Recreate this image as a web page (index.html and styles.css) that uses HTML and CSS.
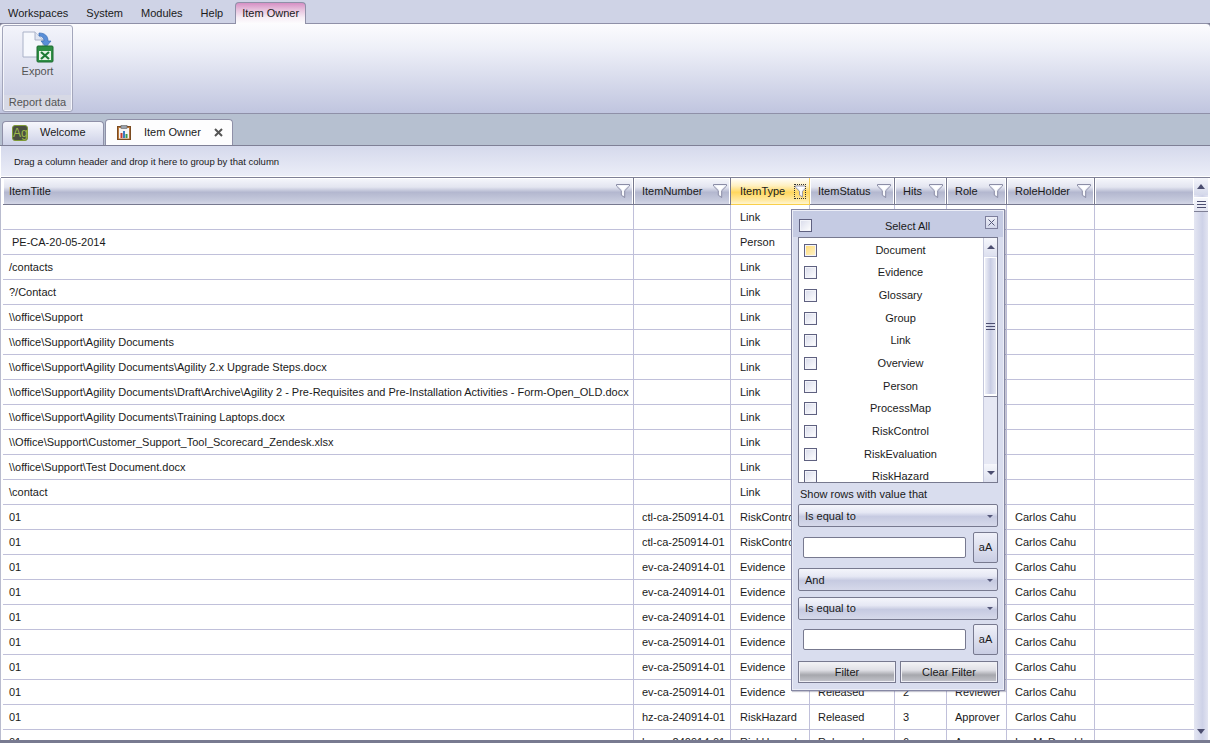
FILE: index.html
```html
<!DOCTYPE html>
<html lang="en">
<head>
<meta charset="utf-8">
<title>Item Owner</title>
<link rel="stylesheet" href="styles.css">
</head>
<body>
<svg class="defs" width="0" height="0" aria-hidden="true">
  <symbol id="funnel" viewBox="0 0 14 14">
    <path d="M0.5 0.5H13.5V2L8.7 6.7V13.5L5.3 11.2V6.7L0.5 2Z" fill="#eef0f8" stroke="#8b8da6" stroke-width="1"/>
    <path d="M2.5 1.8H11.5L7.6 5.8V11.3L6.4 10.5V5.8Z" fill="#fff"/>
  </symbol>
</svg>
<div class="app">
  <nav class="menu">
    <span class="menu-item">Workspaces</span>
    <span class="menu-item">System</span>
    <span class="menu-item">Modules</span>
    <span class="menu-item">Help</span>
    <span class="menu-item menu-active">Item Owner</span>
  </nav>
  <section class="ribbon">
    <div class="ribbon-group">
      <div class="ribbon-body">
        <svg class="export-icon" width="32" height="32" viewBox="0 0 32 32">
          <path d="M1 1H13L21 9V26H1Z" fill="#f6f8fd" stroke="#aab2c8"/>
          <path d="M13 1V9H21" fill="#dfe5f2" stroke="#aab2c8"/>
          <path d="M17 2C23 2 26 5 26 10H29L24 16L19 10H22C22 7 20 5 17 5Z" fill="#5a8fd8" stroke="#3a6db5" stroke-width=".7"/>
          <rect x="15" y="15" width="16" height="16" rx="1" fill="#2f8f45" stroke="#1d6b30"/>
          <rect x="17" y="20" width="12" height="9" fill="#e9f5e9"/>
          <path d="M19 21L27 28M27 21L19 28" stroke="#1d7a35" stroke-width="2.2"/>
        </svg>
        <span class="export-label">Export</span>
      </div>
      <div class="ribbon-title">Report data</div>
    </div>
  </section>
  <div class="tabs">
    <div class="tab tab-plain">
      <span class="ag-icon">Ag</span>
      <span>Welcome</span>
    </div>
    <div class="tab tab-current">
      <svg class="clip-icon" width="14" height="15" viewBox="0 0 14 15">
        <rect x="0.5" y="1.5" width="13" height="13" fill="#b8763a" stroke="#7a4a20"/>
        <rect x="2" y="3" width="10" height="10.5" fill="#f4f4f4"/>
        <rect x="4" y="0.5" width="6" height="3" fill="#9aa2ad" stroke="#666"  stroke-width=".6"/>
        <rect x="3.5" y="8" width="2" height="5" fill="#c23b32"/>
        <rect x="6" y="6" width="2" height="7" fill="#3b7ac2"/>
        <rect x="8.5" y="9" width="2" height="4" fill="#3d9a4a"/>
      </svg>
      <span class="tab-name">Item Owner</span>
      <svg class="tab-close" width="9" height="9" viewBox="0 0 9 9"><path d="M1 1L8 8M8 1L1 8" stroke="#555" stroke-width="2"/></svg>
    </div>
  </div>
  <main class="content">
    <div class="group-panel"><span>Drag a column header and drop it here to group by that column</span></div>
    <div class="grid-wrap">
      <div class="grid">
        <div class="row head">
          <div class="cell c1"><span>ItemTitle</span><svg class="funnel"><use href="#funnel"/></svg></div>
          <div class="cell c2"><span>ItemNumber</span><svg class="funnel"><use href="#funnel"/></svg></div>
          <div class="cell c3 hot"><span>ItemType</span><span class="focus"><svg class="funnel"><use href="#funnel"/></svg></span></div>
          <div class="cell c4"><span>ItemStatus</span><svg class="funnel"><use href="#funnel"/></svg></div>
          <div class="cell c5"><span>Hits</span><svg class="funnel"><use href="#funnel"/></svg></div>
          <div class="cell c6"><span>Role</span><svg class="funnel"><use href="#funnel"/></svg></div>
          <div class="cell c7"><span>RoleHolder</span><svg class="funnel"><use href="#funnel"/></svg></div>
          <div class="cell c8"></div>
        </div>
        <div class="row"><div class="cell c1"></div><div class="cell c2"></div><div class="cell c3">Link</div><div class="cell c4"></div><div class="cell c5"></div><div class="cell c6"></div><div class="cell c7"></div><div class="cell c8"></div></div>
        <div class="row"><div class="cell c1 indent">PE-CA-20-05-2014</div><div class="cell c2"></div><div class="cell c3">Person</div><div class="cell c4"></div><div class="cell c5"></div><div class="cell c6"></div><div class="cell c7"></div><div class="cell c8"></div></div>
        <div class="row"><div class="cell c1">/contacts</div><div class="cell c2"></div><div class="cell c3">Link</div><div class="cell c4"></div><div class="cell c5"></div><div class="cell c6"></div><div class="cell c7"></div><div class="cell c8"></div></div>
        <div class="row"><div class="cell c1">?/Contact</div><div class="cell c2"></div><div class="cell c3">Link</div><div class="cell c4"></div><div class="cell c5"></div><div class="cell c6"></div><div class="cell c7"></div><div class="cell c8"></div></div>
        <div class="row"><div class="cell c1">\\office\Support</div><div class="cell c2"></div><div class="cell c3">Link</div><div class="cell c4"></div><div class="cell c5"></div><div class="cell c6"></div><div class="cell c7"></div><div class="cell c8"></div></div>
        <div class="row"><div class="cell c1">\\office\Support\Agility Documents</div><div class="cell c2"></div><div class="cell c3">Link</div><div class="cell c4"></div><div class="cell c5"></div><div class="cell c6"></div><div class="cell c7"></div><div class="cell c8"></div></div>
        <div class="row"><div class="cell c1">\\office\Support\Agility Documents\Agility 2.x Upgrade Steps.docx</div><div class="cell c2"></div><div class="cell c3">Link</div><div class="cell c4"></div><div class="cell c5"></div><div class="cell c6"></div><div class="cell c7"></div><div class="cell c8"></div></div>
        <div class="row"><div class="cell c1">\\office\Support\Agility Documents\Draft\Archive\Agility 2 - Pre-Requisites and Pre-Installation Activities - Form-Open_OLD.docx</div><div class="cell c2"></div><div class="cell c3">Link</div><div class="cell c4"></div><div class="cell c5"></div><div class="cell c6"></div><div class="cell c7"></div><div class="cell c8"></div></div>
        <div class="row"><div class="cell c1">\\office\Support\Agility Documents\Training Laptops.docx</div><div class="cell c2"></div><div class="cell c3">Link</div><div class="cell c4"></div><div class="cell c5"></div><div class="cell c6"></div><div class="cell c7"></div><div class="cell c8"></div></div>
        <div class="row"><div class="cell c1">\\Office\Support\Customer_Support_Tool_Scorecard_Zendesk.xlsx</div><div class="cell c2"></div><div class="cell c3">Link</div><div class="cell c4"></div><div class="cell c5"></div><div class="cell c6"></div><div class="cell c7"></div><div class="cell c8"></div></div>
        <div class="row"><div class="cell c1">\\office\Support\Test Document.docx</div><div class="cell c2"></div><div class="cell c3">Link</div><div class="cell c4"></div><div class="cell c5"></div><div class="cell c6"></div><div class="cell c7"></div><div class="cell c8"></div></div>
        <div class="row"><div class="cell c1">\contact</div><div class="cell c2"></div><div class="cell c3">Link</div><div class="cell c4"></div><div class="cell c5"></div><div class="cell c6"></div><div class="cell c7"></div><div class="cell c8"></div></div>
        <div class="row"><div class="cell c1">01</div><div class="cell c2">ctl-ca-250914-01</div><div class="cell c3">RiskControl</div><div class="cell c4">Released</div><div class="cell c5">2</div><div class="cell c6">Reviewer</div><div class="cell c7">Carlos Cahu</div><div class="cell c8"></div></div>
        <div class="row"><div class="cell c1">01</div><div class="cell c2">ctl-ca-250914-01</div><div class="cell c3">RiskControl</div><div class="cell c4">Released</div><div class="cell c5">2</div><div class="cell c6">Reviewer</div><div class="cell c7">Carlos Cahu</div><div class="cell c8"></div></div>
        <div class="row"><div class="cell c1">01</div><div class="cell c2">ev-ca-240914-01</div><div class="cell c3">Evidence</div><div class="cell c4">Released</div><div class="cell c5">2</div><div class="cell c6">Reviewer</div><div class="cell c7">Carlos Cahu</div><div class="cell c8"></div></div>
        <div class="row"><div class="cell c1">01</div><div class="cell c2">ev-ca-240914-01</div><div class="cell c3">Evidence</div><div class="cell c4">Released</div><div class="cell c5">2</div><div class="cell c6">Reviewer</div><div class="cell c7">Carlos Cahu</div><div class="cell c8"></div></div>
        <div class="row"><div class="cell c1">01</div><div class="cell c2">ev-ca-240914-01</div><div class="cell c3">Evidence</div><div class="cell c4">Released</div><div class="cell c5">2</div><div class="cell c6">Reviewer</div><div class="cell c7">Carlos Cahu</div><div class="cell c8"></div></div>
        <div class="row"><div class="cell c1">01</div><div class="cell c2">ev-ca-250914-01</div><div class="cell c3">Evidence</div><div class="cell c4">Released</div><div class="cell c5">2</div><div class="cell c6">Reviewer</div><div class="cell c7">Carlos Cahu</div><div class="cell c8"></div></div>
        <div class="row"><div class="cell c1">01</div><div class="cell c2">ev-ca-250914-01</div><div class="cell c3">Evidence</div><div class="cell c4">Released</div><div class="cell c5">2</div><div class="cell c6">Reviewer</div><div class="cell c7">Carlos Cahu</div><div class="cell c8"></div></div>
        <div class="row"><div class="cell c1">01</div><div class="cell c2">ev-ca-250914-01</div><div class="cell c3">Evidence</div><div class="cell c4">Released</div><div class="cell c5">2</div><div class="cell c6">Reviewer</div><div class="cell c7">Carlos Cahu</div><div class="cell c8"></div></div>
        <div class="row"><div class="cell c1">01</div><div class="cell c2">hz-ca-240914-01</div><div class="cell c3">RiskHazard</div><div class="cell c4">Released</div><div class="cell c5">3</div><div class="cell c6">Approver</div><div class="cell c7">Carlos Cahu</div><div class="cell c8"></div></div>
        <div class="row"><div class="cell c1">01</div><div class="cell c2">hz-ca-240914-01</div><div class="cell c3">RiskHazard</div><div class="cell c4">Released</div><div class="cell c5">6</div><div class="cell c6">Approver</div><div class="cell c7">Ian McDonald</div><div class="cell c8"></div></div>
      </div>
      <div class="vscroll">
        <div class="sb-btn"><i class="arrow-up"></i></div>
        <div class="sb-thumb"><i class="grip"></i></div>
        <div class="sb-track"></div>
        <div class="sb-btn sb-bottom"><i class="arrow-down"></i></div>
      </div>
    </div>
  </main>
</div>

<div class="popup">
  <div class="pop-head">
    <span class="check"></span>
    <span class="pop-all">Select All</span>
    <span class="pop-close"><svg width="7" height="7" viewBox="0 0 7 7"><path d="M.5.5L6.5 6.5M6.5.5L.5 6.5" stroke="#55587a"/></svg></span>
  </div>
  <div class="pop-body">
    <div class="list">
      <div class="list-items">
        <div class="list-item"><span class="check check-hot"></span><span class="li-text">Document</span></div>
        <div class="list-item"><span class="check"></span><span class="li-text">Evidence</span></div>
        <div class="list-item"><span class="check"></span><span class="li-text">Glossary</span></div>
        <div class="list-item"><span class="check"></span><span class="li-text">Group</span></div>
        <div class="list-item"><span class="check"></span><span class="li-text">Link</span></div>
        <div class="list-item"><span class="check"></span><span class="li-text">Overview</span></div>
        <div class="list-item"><span class="check"></span><span class="li-text">Person</span></div>
        <div class="list-item"><span class="check"></span><span class="li-text">ProcessMap</span></div>
        <div class="list-item"><span class="check"></span><span class="li-text">RiskControl</span></div>
        <div class="list-item"><span class="check"></span><span class="li-text">RiskEvaluation</span></div>
        <div class="list-item"><span class="check"></span><span class="li-text">RiskHazard</span></div>
      </div>
      <div class="list-scroll">
        <div class="ls-btn"><i class="arrow-up"></i></div>
        <div class="ls-thumb"><i class="grip"></i></div>
        <div class="ls-track"></div>
        <div class="ls-btn"><i class="arrow-down"></i></div>
      </div>
    </div>
    <div class="show-label">Show rows with value that</div>
    <div class="combo"><span>Is equal to</span><i class="arrow-down small"></i></div>
    <div class="value-row"><span class="text-input"></span><span class="case-btn">aA</span></div>
    <div class="combo combo-and"><span>And</span><i class="arrow-down small"></i></div>
    <div class="combo combo-second"><span>Is equal to</span><i class="arrow-down small"></i></div>
    <div class="value-row value-second"><span class="text-input"></span><span class="case-btn">aA</span></div>
    <div class="pop-actions">
      <span class="pop-btn">Filter</span>
      <span class="pop-btn">Clear Filter</span>
    </div>
  </div>
</div>
</body>
</html>
```
FILE: styles.css
```css
* { box-sizing: border-box; }
html, body { margin: 0; height: 743px; overflow: hidden; }
body { font: 11px/13px "Liberation Sans", Arial, sans-serif; color: #1a1a1a; background: #787a90; }
.defs { position: absolute; }
.app { display: flex; flex-direction: column; height: 743px; overflow: hidden; }

/* menu */
.menu { display: flex; gap: 2px; height: 23px; flex: none; background: #cfd3e6; align-items: stretch; }
.menu-item { padding: 7px 8px 0; }
.menu-active { margin: 2px 0 0 2px; padding: 4px 6px 0; height: 22px; position: relative; z-index: 1; border: 1px solid #8f90a8; border-bottom: 0; border-radius: 4px 4px 0 0; background: linear-gradient(#d68fc4 0, #e6bfdc 30%, #f7eef6 70%, #fdfdfe 100%); }

/* ribbon */
.ribbon { flex: none; height: 91px; padding: 1px 0 0 2px; background: linear-gradient(#fcfcfe 0, #eceef7 30%, #c0c5df 100%); border-top: 1px solid #8f90a8; border-bottom: 1px solid #8f90a8; border-radius: 4px 4px 0 0; }
.ribbon-group { width: 71px; height: 87px; display: flex; flex-direction: column; border: 1px solid #a3a6bb; border-radius: 3px; box-shadow: inset 0 0 0 1px #f4f5fb; background: linear-gradient(#f3f4fb, #c7cbe2); }
.ribbon-body { flex: 1; display: flex; flex-direction: column; align-items: center; padding-top: 5px; }
.export-icon { display: block; }
.export-label { color: #555; margin-top: 2px; }
.ribbon-title { height: 15px; margin: 0 1px 1px; background: #d7d9e5; color: #555; text-align: center; line-height: 15px; }

/* tabs */
.tabs { flex: none; height: 31px; display: flex; align-items: flex-end; gap: 1px; padding-left: 2px; background: #b6c0d0; }
.tab { display: flex; align-items: center; border: 1px solid #8f90a8; border-bottom: 0; border-radius: 4px 4px 0 0; }
.tab-plain { width: 102px; height: 24px; padding: 0 0 2px 9px; gap: 12px; background: linear-gradient(#f6f7fc, #cdd1e7); }
.tab-current { width: 128px; height: 26px; padding: 0 0 1px 11px; background: #fdfdfe; }
.ag-icon { width: 16px; height: 16px; border: 1px solid #7e9a34; border-radius: 3px; background: #4a4f42; color: #9db94a; font-size: 12px; line-height: 14px; text-align: center; }
.clip-icon { flex: none; }
.tab-name { margin-left: 13px; }
.tab-close { margin-left: 13px; }

/* content */
.content { flex: none; height: 595px; display: flex; flex-direction: column; border-top: 1px solid #7f8096; background: #fff; }
.group-panel { flex: none; height: 32px; margin-left: 1px; padding: 9px 0 0 13px; font-size: 9.5px; background: linear-gradient(#d5d9ec, #eceef8); border-bottom: 1px solid #7f8096; box-shadow: inset 0 -1px 0 #fff; }
.grid-wrap { flex: none; height: 562px; display: flex; padding-left: 2px; border-left: 1px solid #b9bccf; overflow: hidden; }
.grid { width: 1191px; flex: none; overflow: hidden; }
.row { display: flex; height: 25px; border-bottom: 1px solid #c0c0da; }
.cell { flex: none; height: 100%; border-right: 1px solid #c0c0da; padding: 0 0 0 5px; line-height: 24px; white-space: nowrap; overflow: hidden; }
.c1 { width: 631px; padding-left: 6px; }
.c2 { width: 97px; padding-left: 8px; }
.c3 { width: 79px; padding-left: 9px; }
.c4 { width: 85px; padding-left: 8px; }
.c5 { width: 52px; padding-left: 8px; }
.c6 { width: 60px; padding-left: 8px; }
.c7 { width: 88px; padding-left: 8px; }
.c8 { flex: 1; border-right: 0; }
.indent { padding-left: 9px; }
.head { height: 27px; border-bottom: 1px solid #77798f; background: linear-gradient(#f6f7fc 0, #e3e5f0 35%, #b3b7cf 55%, #c5c9dc 85%, #d4d7e6 100%); }
.head .cell { display: flex; align-items: center; justify-content: space-between; padding-right: 3px; border-right: 1px solid #77798f; box-shadow: inset 1px 0 0 #fff, inset -1px 0 0 #fff, inset 0 1px 0 #fff; }
.head .c8 { border-right: 0; }
.head .hot { background: linear-gradient(#fff 0, #fff0c0 30%, #ffd75e 55%, #ffe9a2 85%, #fff5d0 100%); border-right: 1px solid #f6cf5a; border-bottom: 1px solid #f9cf4a; margin-bottom: -1px; height: 27px; box-shadow: none; }
.funnel { width: 14px; height: 14px; flex: none; display: block; }
.focus { display: block; border: 1px dotted #333; height: 15px; width: 12px; overflow: hidden; }
.focus .funnel { width: 12px; height: 13px; }

/* vertical scrollbar */
.vscroll { width: 14px; flex: none; height: 100%; display: flex; flex-direction: column; background: linear-gradient(90deg, #e4e6f2, #ced2e8 60%, #e2e4f1); }
.sb-btn { height: 17px; flex: none; display: flex; align-items: center; justify-content: center; background: linear-gradient(#f4f5fb, #d4d8ea); }
.sb-bottom { background: none; }
.sb-thumb { height: 15px; margin-top: 2px; flex: none; display: flex; align-items: center; justify-content: center; background: linear-gradient(#f7f8fc, #e2e4f1); border-top: 1px solid #fff; border-bottom: 1px solid #7f8096; }
.sb-track { flex: 1; }
.arrow-up, .arrow-down { display: block; width: 0; height: 0; border-left: 4px solid transparent; border-right: 4px solid transparent; }
.arrow-up { border-bottom: 5px solid #4c4e70; }
.arrow-down { border-top: 5px solid #4c4e70; }
.arrow-down.small { border-left-width: 3px; border-right-width: 3px; border-top-width: 3px; border-top-color: #55587a; }
.grip { display: block; width: 9px; height: 7px; border-top: 1px solid #4c4e70; border-bottom: 1px solid #4c4e70; position: relative; }
.grip::after { content: ""; position: absolute; left: 0; right: 0; top: 2px; height: 1px; background: #4c4e70; }

/* popup */
.popup { position: absolute; left: 791px; top: 209px; width: 214px; height: 482px; display: flex; flex-direction: column; border: 1px solid #8688a4; background: #d9ddee; box-shadow: inset 0 0 0 1px #eceef7, 1px 1px 1px rgba(90,90,120,.35); }
.pop-head { flex: none; height: 26px; display: flex; align-items: center; padding: 3px 5px 0 6px; background: #c5cbe3; margin: 1px 1px 0; }
.check { display: block; flex: none; width: 13px; height: 13px; border: 1px solid #5f6180; box-shadow: inset 0 0 0 1px #f3f4fa; background: linear-gradient(135deg, #d8dbeb, #fff); }
.check-hot { background: linear-gradient(135deg, #ffdb73, #fff4cf); }
.pop-all { flex: 1; text-align: center; padding: 2px 0 0 18px; }
.pop-close { width: 13px; height: 13px; margin-top: -7px; display: flex; align-items: center; justify-content: center; border: 1px solid #7c7e9c; background: linear-gradient(#eceef7, #d2d6ea); }
.pop-body { flex: 1; padding: 0 5px; min-height: 0; margin: 0 1px; }
.list { height: 246px; display: flex; border: 1px solid #77798f; background: #fff; overflow: hidden; }
.list-items { flex: 1; padding-top: 1px; overflow: hidden; }
.list-item { height: 22.67px; display: flex; align-items: center; padding-left: 5px; }
.li-text { flex: 1; text-align: center; padding-left: 1px; }
.list-scroll { width: 14px; flex: none; display: flex; flex-direction: column; border-left: 1px solid #c5c8dc; background: linear-gradient(90deg, #dfe2f0, #cdd1e6); }
.ls-btn { height: 18px; flex: none; display: flex; align-items: center; justify-content: center; background: linear-gradient(#f6f7fc, #dde0ef); }
.list-scroll .arrow-up { border-bottom-width: 4px; }
.list-scroll .arrow-down { border-top-width: 4px; }
.ls-thumb { height: 139px; flex: none; margin-top: 1px; display: flex; align-items: center; justify-content: center; border: 1px solid #fff; border-bottom: 2px solid #fff; background: linear-gradient(90deg, #eef0f8, #c8cce3 50%, #e4e6f2); }
.ls-track { flex: 1; background: #e6e8f4; border-top: 1px solid #7f8096; }
.show-label { height: 21px; padding: 5px 0 0 2px; }
.combo { height: 23px; display: flex; align-items: center; justify-content: space-between; padding: 1px 4px 0 6px; border: 1px solid #77798f; border-radius: 2px; background: linear-gradient(#f4f5fb 0, #e6e8f4 35%, #c6cae1 55%, #d6d9ea 100%); }
.combo-and { margin-top: 5px; }
.combo-second { margin-top: 6px; padding-top: 0; }
.value-row { height: 31px; margin-top: 5px; display: flex; align-items: center; justify-content: space-between; padding-left: 5px; }
.value-second { margin-top: 4px; }
.text-input { width: 163px; height: 21px; background: #fff; border: 1px solid #77798f; border-radius: 2px; }
.case-btn { width: 25px; height: 31px; display: flex; align-items: center; justify-content: center; border: 1px solid #77798f; border-radius: 2px; background: linear-gradient(#f0f1f9, #c9cde3); }
.pop-actions { display: flex; gap: 4px; margin-top: 6px; }
.pop-btn { width: 98px; height: 22px; display: flex; align-items: center; justify-content: center; border: 1px solid #77798f; box-shadow: inset 0 0 0 1px #f0f0f5; background: linear-gradient(#f4f4f6 0, #e0e0e6 40%, #a6a7ad 65%, #c4c5cc 100%); }
```
